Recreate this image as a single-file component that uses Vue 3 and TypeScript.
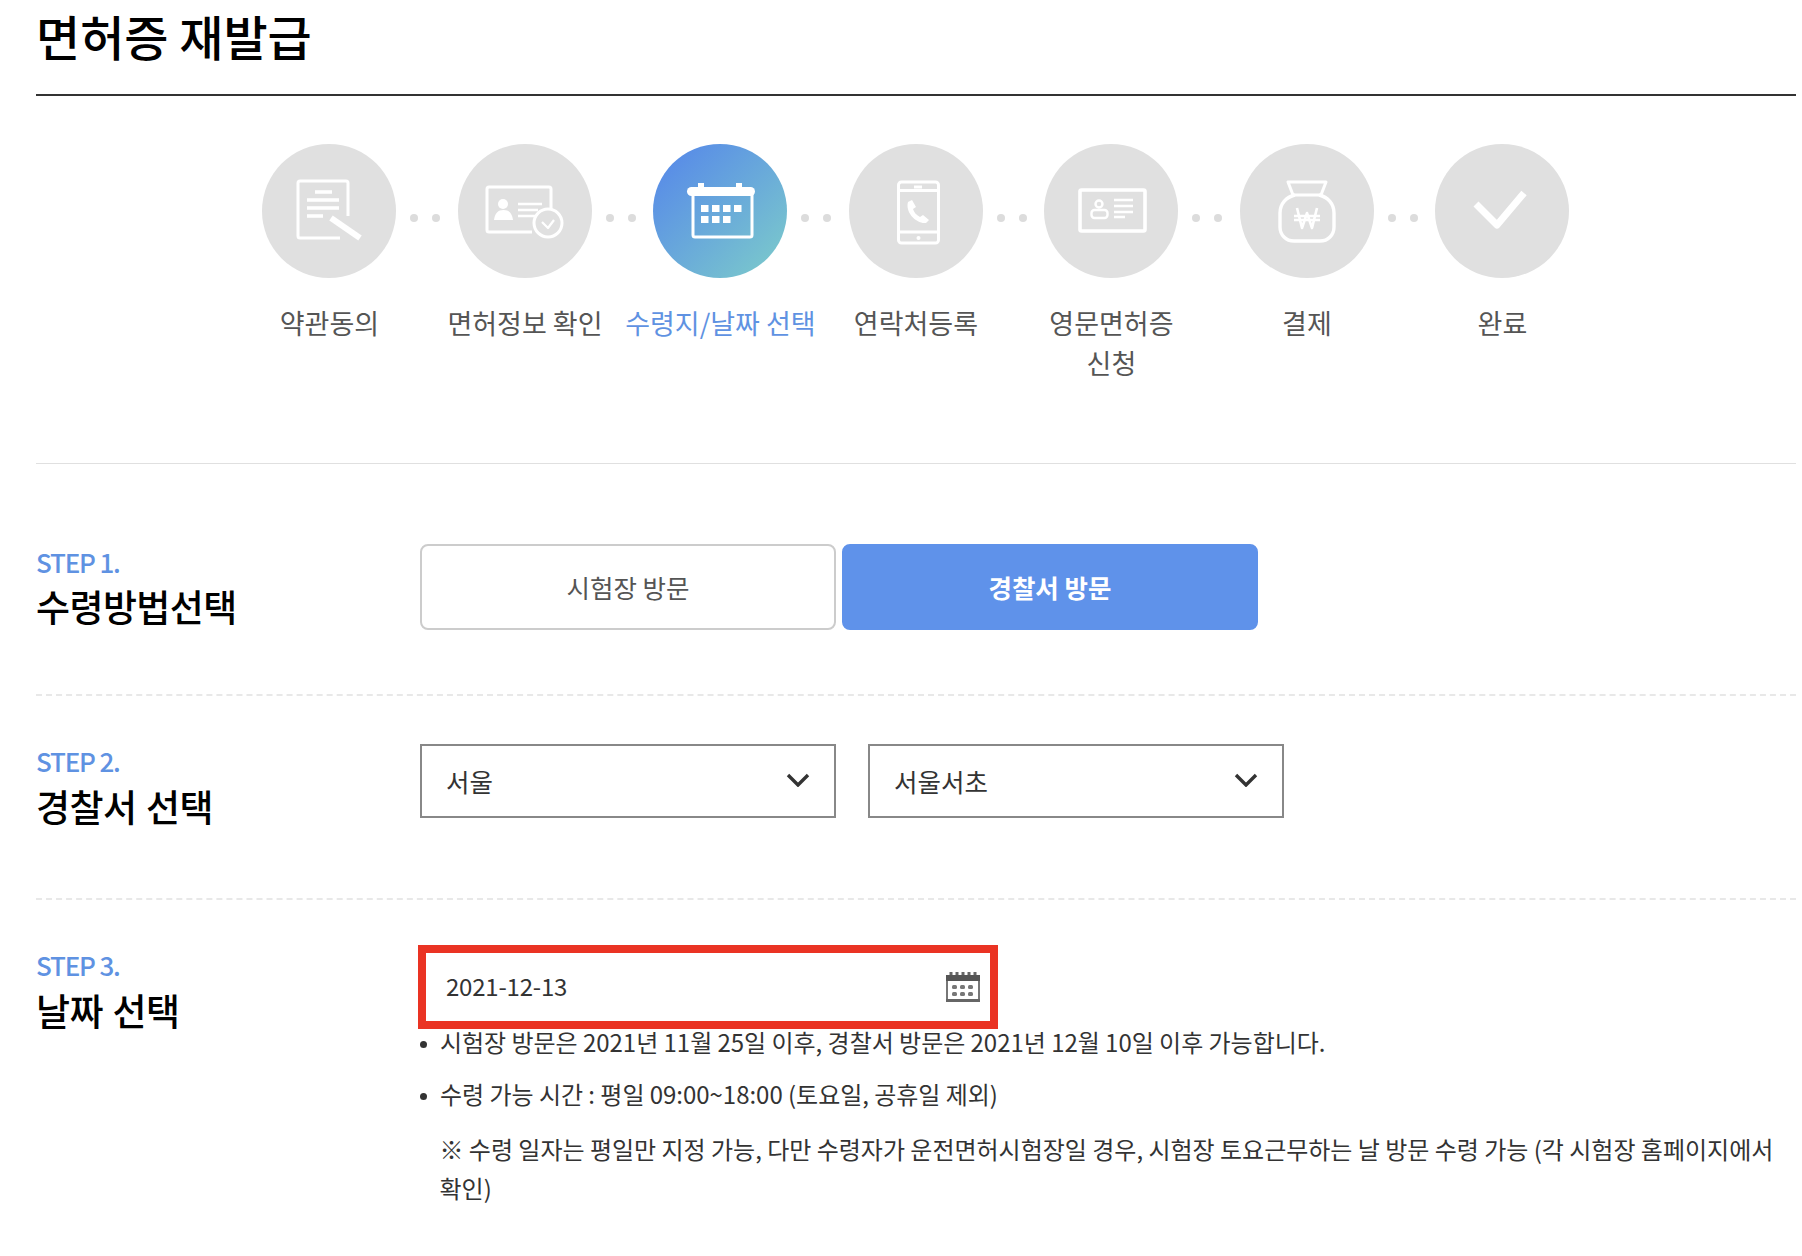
<script setup lang="ts">
const steps = [
  { key: 'doc', label: '약관동의' },
  { key: 'card', label: '면허정보 확인' },
  { key: 'cal', label: '수령지/날짜 선택', active: true },
  { key: 'phone', label: '연락처등록' },
  { key: 'id', label: '영문면허증 신청' },
  { key: 'pay', label: '결제' },
  { key: 'done', label: '완료' },
]
</script>

<template>
  <main class="page">
    <h1 class="title">면허증 재발급</h1>

    <ol class="steps">
      <li v-for="(s, i) in steps" :key="s.key" class="step" :class="{ active: s.active }">
        <div class="circle">
          <svg viewBox="0 0 134 134" width="134" height="134" fill="none" stroke="#fff" stroke-width="3" stroke-linejoin="round">
            <g v-if="s.key === 'doc'">
              <path d="M86 72V39a2 2 0 0 0-2-2H38a2 2 0 0 0-2 2v53a2 2 0 0 0 2 2h40" />
              <path d="M53 48h17M45 56h32M45 64h32M45 72h16" stroke-width="3.4" />
              <path d="M69 74l29 20" stroke-width="6" />
            </g>
            <g v-else-if="s.key === 'card'">
              <path d="M74 88H31a2 2 0 0 1-2-2V45a2 2 0 0 1 2-2h60a2 2 0 0 1 2 2v20" />
              <circle cx="45" cy="60" r="5" fill="#fff" stroke="none" />
              <path d="M36 76c1-7 4-10 9.500-10s8.500 3 9.500 10z" fill="#fff" stroke="none" />
              <path d="M60 60h24M60 66h20M60 72h17" stroke-width="2.4" />
              <circle cx="90" cy="79" r="14" />
              <path d="M84 78l6 6 6-8" stroke-width="2.2" />
            </g>
            <g v-else-if="s.key === 'cal'">
              <path d="M38.500 47.500h59" stroke-width="9" stroke-linecap="round" />
              <path d="M48 39v6M86 39v6" stroke-width="6" />
              <path d="M40 50v41a2 2 0 0 0 2 2h55a2 2 0 0 0 2-2V50" />
              <g fill="#fff" stroke="none">
                <rect x="48" y="61" width="7.500" height="7" /><rect x="59" y="61" width="7.500" height="7" /><rect x="70" y="61" width="7.500" height="7" /><rect x="81" y="61" width="7.500" height="7" />
                <rect x="48" y="72" width="7.500" height="7" /><rect x="59" y="72" width="7.500" height="7" /><rect x="70" y="72" width="7.500" height="7" />
              </g>
            </g>
            <g v-else-if="s.key === 'phone'">
              <rect x="49.500" y="38" width="40" height="61" rx="3" />
              <path d="M49.500 46.500h40M49.500 88h40" />
              <path d="M65 43h8" />
              <circle cx="69.500" cy="94" r="2" fill="#fff" stroke="none" />
              <path d="M59 58l4-2 4 7-3 2c1 3 3 6 7 8l3-2 6 5-3 3c-10 1-21-11-18-21z" fill="#fff" stroke="none" />
            </g>
            <g v-else-if="s.key === 'id'">
              <rect x="36" y="46" width="65" height="41" rx="1.500" stroke-width="3.600" />
              <circle cx="55" cy="60" r="3.500" stroke-width="2.400" />
              <rect x="47.500" y="66" width="16" height="8" rx="3" stroke-width="2.400" />
              <path d="M70 56h19M70 62h19M70 68h19M70 73h11" stroke-width="2.400" />
            </g>
            <g v-else-if="s.key === 'pay'">
              <path d="M48 38h38l-5 13H53z" />
              <path d="M55 51C46 53 40 60 40 69v14c0 8 6 14 14 14h26c8 0 14-6 14-14V69c0-9-6-16-15-18" stroke-width="3.400" />
              <path d="M57 64l5 20 5-15 5 15 5-20M54 72h26M54 76h26" stroke-width="2.600" />
            </g>
            <path v-else d="M41 60l21 21 27-32" stroke-width="7" />
          </svg>
        </div>
        <span v-if="i < steps.length - 1" class="dots"><i></i><i></i></span>
        <p class="step-label">{{ s.label }}</p>
      </li>
    </ol>

    <section class="row row-first">
      <header class="head">
        <p class="num">STEP 1.</p>
        <h2 class="name">수령방법선택</h2>
      </header>
      <div class="buttons">
        <button type="button" class="choice">시험장 방문</button>
        <button type="button" class="choice on">경찰서 방문</button>
      </div>
    </section>

    <section class="row row-second">
      <header class="head">
        <p class="num">STEP 2.</p>
        <h2 class="name">경찰서 선택</h2>
      </header>
      <div class="selects">
        <div class="select">
          <span>서울</span>
          <svg viewBox="0 0 24 14" width="24" height="14" fill="none" stroke="#333" stroke-width="3.400"><path d="M2 2l10 10L22 2" /></svg>
        </div>
        <div class="select">
          <span>서울서초</span>
          <svg viewBox="0 0 24 14" width="24" height="14" fill="none" stroke="#333" stroke-width="3.400"><path d="M2 2l10 10L22 2" /></svg>
        </div>
      </div>
    </section>

    <section class="row row-third">
      <header class="head">
        <p class="num">STEP 3.</p>
        <h2 class="name">날짜 선택</h2>
      </header>
      <div class="date-col">
        <div class="date">
          <span>2021-12-13</span>
          <svg viewBox="0 0 34 30" width="34" height="30">
            <path d="M5 0v3M11 0v3M17 0v3M23 0v3M29 0v3" stroke="#666" stroke-width="3" />
            <rect x="0" y="3" width="34" height="6" fill="#555" />
            <path d="M1 9v19h32V9" fill="none" stroke="#777" stroke-width="2" />
            <rect x="0" y="27" width="34" height="3" fill="#666" />
            <g fill="#777">
              <rect x="6" y="13" width="5" height="4" rx="1.500" /><rect x="14" y="13" width="5" height="4" rx="1.500" /><rect x="22" y="13" width="5" height="4" rx="1.500" />
              <rect x="6" y="20" width="5" height="4" rx="1.500" /><rect x="14" y="20" width="5" height="4" rx="1.500" /><rect x="22" y="20" width="5" height="4" rx="1.500" />
            </g>
          </svg>
        </div>
        <ul class="notes">
          <li>시험장 방문은 2021년 11월 25일 이후, 경찰서 방문은 2021년 12월 10일 이후 가능합니다.</li>
          <li>수령 가능 시간 : 평일 09:00~18:00 (토요일, 공휴일 제외)</li>
        </ul>
        <p class="note-plain">※ 수령 일자는 평일만 지정 가능, 다만 수령자가 운전면허시험장일 경우, 시험장 토요근무하는 날 방문 수령 가능 (각 시험장 홈페이지에서 확인)</p>
      </div>
    </section>
  </main>
</template>

<style>
html, body { background: #fff; }
</style>

<style scoped>
.page {
  box-sizing: border-box;
  width: 1802px;
  height: 1256px;
  overflow: hidden;
  padding: 0 6px 0 36px;
  font-family: "Noto Sans CJK KR", "Noto Sans", sans-serif;
  color: #333;
}
p, h1, h2, ul, ol { margin: 0; padding: 0; list-style: none; }
.title {
  height: 96px;
  box-sizing: border-box;
  border-bottom: 2px solid #333;
  font-size: 48px;
  line-height: 70px;
  font-weight: 500;
  color: #000;
}
.steps {
  display: flex;
  padding: 48px 0 0 195.7px;
  height: 368px;
  box-sizing: border-box;
  border-bottom: 1px solid #e0e0e0;
}
.step {
  position: relative;
  width: 195.5px;
  display: flex;
  flex-direction: column;
  align-items: center;
}
.circle {
  width: 134px;
  height: 134px;
  border-radius: 50%;
  background: #e0e0e0;
}
.circle svg { display: block; }
.active .circle { background: linear-gradient(135deg, #5a8fe6 15%, #79c6cd 90%); }
.dots {
  position: absolute;
  top: 70px;
  left: 178.5px;
  display: flex;
  gap: 14px;
}
.dots i { width: 8px; height: 8px; border-radius: 50%; background: #dcdcdc; }
.step-label {
  margin-top: 25px;
  width: 130px;
  text-align: center;
  font-size: 27px;
  line-height: 40px;
  color: #555;
  word-break: keep-all;
}
.step:nth-child(2) .step-label,
.step:nth-child(3) .step-label { width: 195px; white-space: nowrap; }
.active .step-label { color: #5f92e2; }
.row { display: flex; }
.row-first { padding-top: 80px; height: 232px; box-sizing: border-box; border-bottom: 2px dashed #e8e8e8; }
.row-second { padding-top: 48px; height: 204px; box-sizing: border-box; border-bottom: 2px dashed #e8e8e8; }
.row-third { padding-top: 44px; }
.head { width: 384px; flex: none; }
.num {
  font-size: 26px;
  line-height: 34px;
  font-weight: 500;
  color: #5f92e2;
  letter-spacing: -1.2px;
}
.row-first .num { margin-top: 1px; }
.row-third .num { margin-top: 4px; }
.name {
  font-size: 37px;
  line-height: 52px;
  font-weight: 500;
  color: #000;
  letter-spacing: -0.6px;
  word-spacing: 2px;
}
.row-first .name { margin-top: 1px; }
.row-second .name { margin-top: 2px; }
.row-third .name { margin-top: 2px; }
.buttons { display: flex; gap: 6px; }
.choice {
  width: 416px;
  height: 86px;
  box-sizing: border-box;
  border: 2px solid #ccc;
  border-radius: 8px;
  background: #fff;
  font: inherit;
  font-size: 25.500px;
  color: #555;
  padding: 0 0 2px;
}
.choice.on { border-color: #5f92ea; background: #5f92ea; color: #fff; font-weight: 700; }
.selects { display: flex; gap: 32px; }
.select {
  width: 416px;
  height: 74px;
  box-sizing: border-box;
  border: 2px solid #888;
  display: flex;
  align-items: center;
  justify-content: space-between;
  padding: 0 24px 2px;
  font-size: 25.500px;
  color: #333;
}
.date-col { flex: 1; min-width: 0; padding-top: 1px; }
.date {
  margin-left: -2px;
  width: 580px;
  height: 84px;
  box-sizing: border-box;
  border: 8px solid #ea3323;
  display: flex;
  align-items: center;
  justify-content: space-between;
  padding: 0 10px 0 20px;
  font-size: 24px;
  letter-spacing: -0.2px;
  color: #333;
}
.date span { margin-top: -3px; }
.notes { margin-top: -2px; display: flex; flex-direction: column; gap: 22px; }
.notes li {
  position: relative;
  padding-left: 20px;
  font-size: 24px;
  line-height: 30px;
  letter-spacing: -0.03px;
  color: #333;
}
.notes li::before {
  content: "";
  position: absolute;
  left: 0;
  top: 14px;
  width: 7px;
  height: 7px;
  border-radius: 50%;
  background: #333;
}
.note-plain {
  padding-left: 19.5px;
  margin-top: 20px;
  font-size: 24px;
  line-height: 39px;
  letter-spacing: -0.01px;
  color: #333;
}
</style>
